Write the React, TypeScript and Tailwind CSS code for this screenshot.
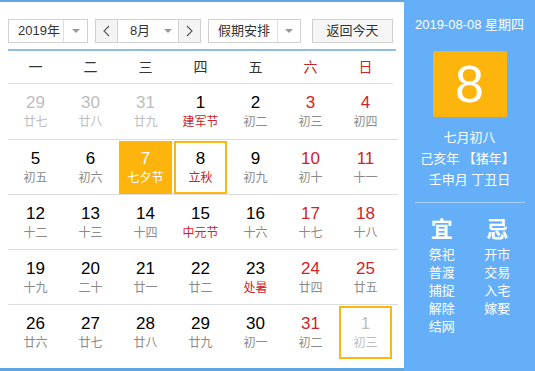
type Day = {
  n: number
  l: string
  other?: boolean
  fest?: boolean
  sel?: boolean
  ring?: boolean
}

const rows: Day[][] = [
  [
    { n: 29, l: '廿七', other: true },
    { n: 30, l: '廿八', other: true },
    { n: 31, l: '廿九', other: true },
    { n: 1, l: '建军节', fest: true },
    { n: 2, l: '初二' },
    { n: 3, l: '初三' },
    { n: 4, l: '初四' },
  ],
  [
    { n: 5, l: '初五' },
    { n: 6, l: '初六' },
    { n: 7, l: '七夕节', sel: true },
    { n: 8, l: '立秋', fest: true, ring: true },
    { n: 9, l: '初九' },
    { n: 10, l: '初十' },
    { n: 11, l: '十一' },
  ],
  [
    { n: 12, l: '十二' },
    { n: 13, l: '十三' },
    { n: 14, l: '十四' },
    { n: 15, l: '中元节', fest: true },
    { n: 16, l: '十六' },
    { n: 17, l: '十七' },
    { n: 18, l: '十八' },
  ],
  [
    { n: 19, l: '十九' },
    { n: 20, l: '二十' },
    { n: 21, l: '廿一' },
    { n: 22, l: '廿二' },
    { n: 23, l: '处暑', fest: true },
    { n: 24, l: '廿四' },
    { n: 25, l: '廿五' },
  ],
  [
    { n: 26, l: '廿六' },
    { n: 27, l: '廿七' },
    { n: 28, l: '廿八' },
    { n: 29, l: '廿九' },
    { n: 30, l: '初一' },
    { n: 31, l: '初二' },
    { n: 1, l: '初三', other: true, ring: true },
  ],
]

const weekdays = ['一', '二', '三', '四', '五', '六', '日']

const Caret = () => (
  <span className="w-0 h-0 border-l-[4px] border-r-[4px] border-t-[4px] border-l-transparent border-r-transparent border-t-[#999]"></span>
)

const Chevron = ({ dir }: { dir: 'l' | 'r' }) => (
  <svg width="7" height="12" viewBox="0 0 7 12">
    <path d={dir === 'l' ? 'M6 1 L1 6 L6 11' : 'M1 1 L6 6 L1 11'} fill="none" stroke="#555" strokeWidth="1.1" />
  </svg>
)

function Cell({ d, col }: { d: Day; col: number }) {
  const weekend = col >= 5
  let numColor = 'text-black'
  let lunarColor = 'text-[#8a8a8a]'
  if (d.other) {
    numColor = 'text-[#bdbdbd]'
    lunarColor = 'text-[#bdbdbd]'
  } else if (weekend) {
    numColor = 'text-[#d0232b]'
  }
  if (d.fest) lunarColor = 'text-[#c8252c]'
  if (d.sel) {
    numColor = 'text-white'
    lunarColor = 'text-white'
  }
  return (
    <div
      className={
        'h-[53px] mx-px mt-px flex flex-col items-center pt-[8px] ' +
        (d.sel ? 'bg-[#fdb40c] ' : '') +
        (d.ring ? 'shadow-[inset_0_0_0_2px_#fbb70f] ' : '')
      }
    >
      <span className={'text-[17px] leading-[20px] ' + numColor}>{d.n}</span>
      <span className={'text-[12px] leading-[17px] mt-[1px] ' + lunarColor}>{d.l}</span>
    </div>
  )
}

export default function App() {
  return (
    <div
      className="w-[535px] h-[371px] flex bg-white overflow-hidden"
      style={{ fontFamily: '"Liberation Sans", Arial, "Noto Sans CJK SC", sans-serif' }}
    >
      {/* left: calendar */}
      <div className="w-[404px] h-full flex flex-col border-t-2 border-b-[3px] border-[#5fa4e4]">
        <div className="flex items-center px-[8px] pt-[11px] h-[47px] text-[13px] text-[#333]">
          <div className="w-[80px] h-[24px] border border-[#d0d0d0] flex items-center">
            <span className="flex-1 pl-[9px]">2019年</span>
            <span className="w-[24px] h-full border-l border-[#e0e0e0] flex items-center justify-center">
              <Caret />
            </span>
          </div>
          <div className="ml-[7px] h-[24px] flex border border-[#d0d0d0]">
            <span className="w-[22px] bg-[#f4f4f4] border-r border-[#d0d0d0] flex items-center justify-center">
              <Chevron dir="l" />
            </span>
            <span className="w-[60px] flex items-center">
              <span className="flex-1 text-center pl-[4px]">8月</span>
              <span className="w-[20px] flex items-center justify-center">
                <Caret />
              </span>
            </span>
            <span className="w-[22px] bg-[#f4f4f4] border-l border-[#d0d0d0] flex items-center justify-center">
              <Chevron dir="r" />
            </span>
          </div>
          <div className="ml-[7px] w-[93px] h-[24px] border border-[#d0d0d0] flex items-center">
            <span className="flex-1 pl-[9px]">假期安排</span>
            <span className="w-[23px] h-full border-l border-[#e0e0e0] flex items-center justify-center">
              <Caret />
            </span>
          </div>
          <div className="ml-[11px] w-[81px] h-[24px] border border-[#d0d0d0] bg-[#f6f6f6] flex items-center justify-center">
            返回今天
          </div>
        </div>
        <div className="mx-[8px] h-[2px] bg-[#8ebde9]"></div>
        <div className="mx-[8px] grid grid-cols-7 w-[385px] h-[33px] items-center border-b border-[#dcdcdc] text-[14px]">
          {weekdays.map((w, i) => (
            <span key={w} className={'text-center ' + (i >= 5 ? 'text-[#c8252c]' : 'text-[#333]')}>
              {w}
            </span>
          ))}
        </div>
        <div className="mx-[8px] w-[390px] flex flex-col">
          {rows.map((r, ri) => (
            <div key={ri} className={'grid grid-cols-[repeat(7,55px)] h-[55px] ' + (ri > 0 ? 'border-t border-[#dcdcdc]' : '')}>
              {r.map((d, ci) => (
                <Cell key={ci} d={d} col={ci} />
              ))}
            </div>
          ))}
        </div>
      </div>

      {/* right: day detail */}
      <div className="flex-1 h-full bg-[#64aff8] flex flex-col items-center text-white text-[13px]">
        <div className="mt-[16px] leading-[18px]">2019-08-08 星期四</div>
        <div className="mt-[17px] w-[74px] h-[66px] bg-[#fdb40c] rounded-[2px] flex items-center justify-center text-[52px] leading-none">
          8
        </div>
        <div className="mt-[10px] leading-[21px] flex flex-col items-center">
          <span>七月初八</span>
          <span className="-ml-[4px]">己亥年 【猪年】</span>
          <span>壬申月 丁丑日</span>
        </div>
        <div className="mt-[12px] w-[110px] h-px bg-[#a6d0fa]"></div>
        <div className="mt-[14px] w-full grid grid-cols-2 px-[10px]">
          <div className="flex flex-col items-center">
            <span className="text-[22px] font-bold leading-[26px] mb-[3px]">宜</span>
            <div className="leading-[18px] flex flex-col">
              <span>祭祀</span>
              <span>普渡</span>
              <span>捕捉</span>
              <span>解除</span>
              <span>结网</span>
            </div>
          </div>
          <div className="flex flex-col items-center">
            <span className="text-[22px] font-bold leading-[26px] mb-[3px]">忌</span>
            <div className="leading-[18px] flex flex-col">
              <span>开市</span>
              <span>交易</span>
              <span>入宅</span>
              <span>嫁娶</span>
            </div>
          </div>
        </div>
      </div>
    </div>
  )
}
